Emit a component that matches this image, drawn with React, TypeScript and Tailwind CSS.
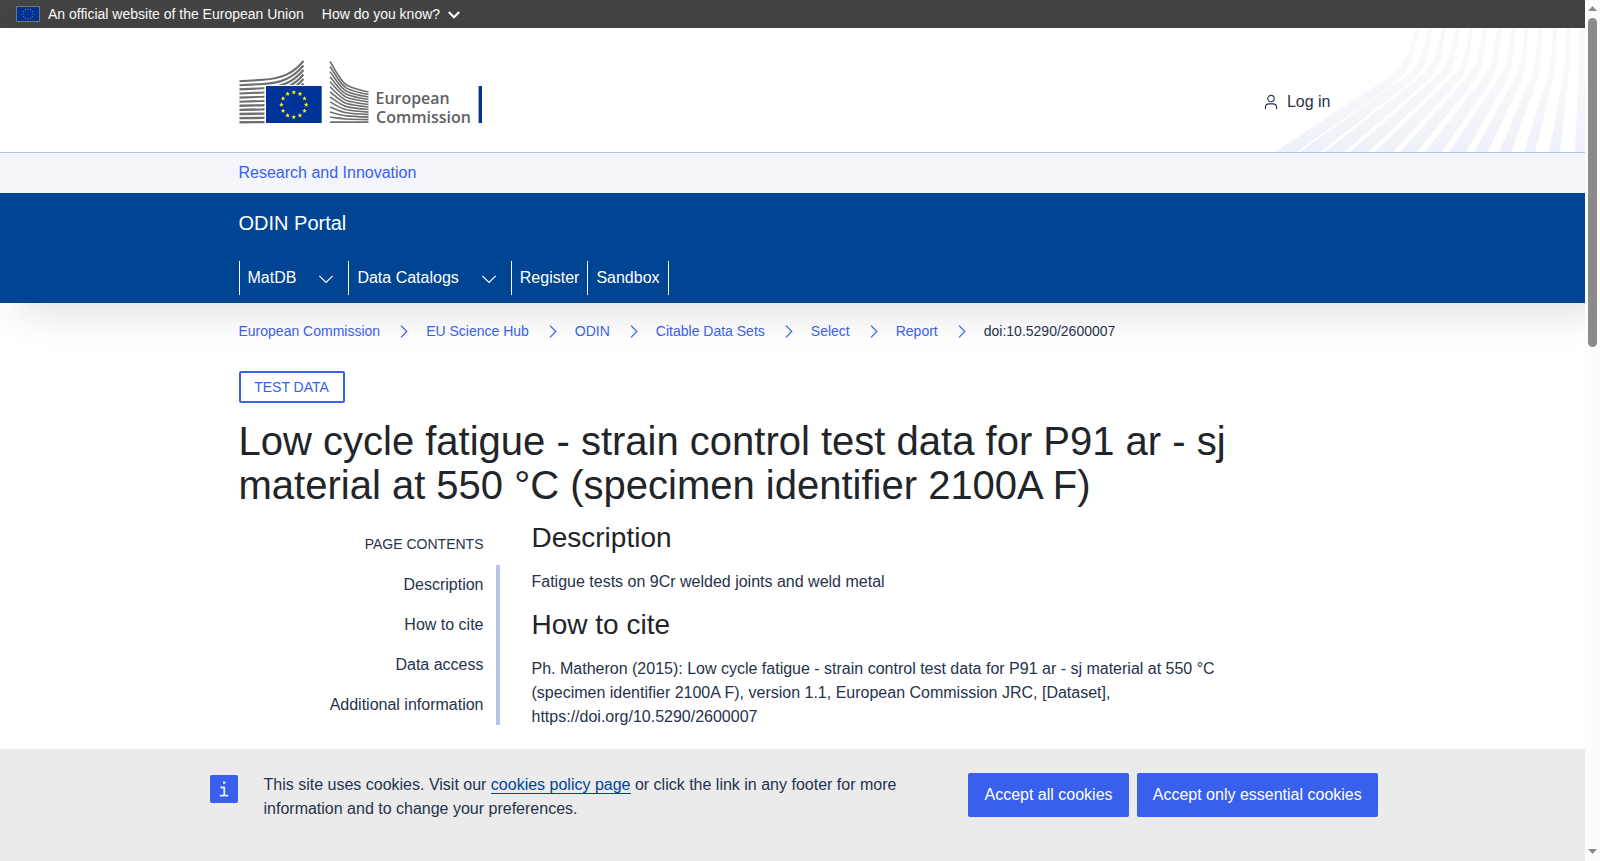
const NAV_ITEMS = [
  { label: "MatDB", hasMenu: true },
  { label: "Data Catalogs", hasMenu: true },
  { label: "Register", hasMenu: false },
  { label: "Sandbox", hasMenu: false },
];

const BREADCRUMBS = ["European Commission", "EU Science Hub", "ODIN", "Citable Data Sets", "Select", "Report"];

const PAGE_CONTENTS = ["Description", "How to cite", "Data access", "Additional information"];

// top left, top right, bottom left, bottom right x of every ribbon
const RIBBONS = [
  [175.5, 179, 35, 57],
  [189, 192.5, 59.5, 80],
  [202.5, 206, 84.5, 104],
  [216, 219.5, 110, 128],
  [230, 233, 135, 153],
  [243.5, 247, 160, 177],
  [257.5, 261.5, 185, 202],
  [271.5, 275.5, 209, 226],
  [285, 288.5, 234, 248],
  [298.5, 302.5, 259, 271],
  [313, 317, 284, 295],
  [326.5, 330, 309, 320],
  [339, 345, 335, 345],
];

function ribbonPath(t1: number, t2: number, b1: number, b2: number) {
  const edge = (t: number, b: number, my: number) => {
    const mx = t - (t - b) * 0.19;
    const slope = (mx - b) / (124 - my);
    return { c1: t - (t - b) * 0.04, c2: mx + slope * 13, mx, my };
  };
  const l = edge(t1, b1, 49);
  const r = edge(t2, b2, 54);
  return `M${t1} 0C${l.c1} 18 ${l.c2} 36 ${l.mx} ${l.my}L${b1} 124H${b2}L${r.mx} ${r.my}C${r.c2} 41 ${r.c1} 20 ${t2} 0Z`;
}

// stripes of the building, left wing: y at the outer edge, at the fold and at the tip
const LEFT_STRIPES = Array.from({ length: 11 }, (_, i) => {
  const outer = 21.2 + i * 4.1;
  const fold = 19.8 + i * 4.23;
  const tip = 1 + i * 4.5;
  return `M1.5 ${outer}L25 ${fold}C44 ${fold - 1.3} 55 ${tip + (fold - tip) * 0.67} 65.5 ${tip}`;
});

const RIGHT_STRIPES = Array.from({ length: 13 }, (_, i) => {
  const outer = 1.5 + i * 5.05;
  const fold = 25 + i * 3.09;
  const tip = 32 + i * 2.51;
  return `M92 ${outer}C98.5 ${outer + (fold - outer) * 0.45} 102.5 ${outer + (fold - outer) * 0.83} 108.5 ${fold}Q114.5 ${(fold + tip) / 2} 130.5 ${tip}`;
});

function Stars({ cx, cy, radius, size }: { cx: number; cy: number; radius: number; size: number }) {
  return (
    <>
      {Array.from({ length: 12 }, (_, i) => {
        const a = (i * Math.PI) / 6;
        const x = cx + radius * Math.sin(a);
        const y = cy - radius * Math.cos(a);
        const points = Array.from({ length: 10 }, (_, k) => {
          const r = k % 2 === 0 ? size : size * 0.45;
          const b = (k * Math.PI) / 5;
          return `${(x + r * Math.sin(b)).toFixed(2)},${(y - r * Math.cos(b)).toFixed(2)}`;
        }).join(" ");
        return <polygon key={i} points={points} fill="#ffed00" />;
      })}
    </>
  );
}

function Logo() {
  return (
    <svg width="246" height="74" viewBox="0 0 246 74" className="-ml-[0.5px] block">
      <g fill="none" stroke="#6d6e70">
        {LEFT_STRIPES.map((d, i) => (
          <path key={d} d={d} strokeWidth={i < 6 ? 2.1 : 2.4} />
        ))}
        {RIGHT_STRIPES.map((d) => (
          <path key={d} d={d} strokeWidth="1.6" />
        ))}
      </g>
      <path d="M26.5 25H86V66H26.5Z" fill="#fff" />
      <path d="M28 26H83.7V63H28Z" fill="#039" />
      <Stars cx={55.8} cy={44.7} radius={12.4} size={2.4} />
      <g fill="#606164" fontSize="17" fontWeight="600" fontFamily="'Open Sans', sans-serif">
        <text x="137.6" y="44" textLength="74" lengthAdjust="spacingAndGlyphs">
          European
        </text>
        <text x="138" y="63" textLength="95" lengthAdjust="spacingAndGlyphs">
          Commission
        </text>
      </g>
      <path d="M240.6 26H244V63H240.6Z" fill="#039" />
    </svg>
  );
}

function Chevron({ className }: { className?: string }) {
  return (
    <svg width="16" height="16" viewBox="0 0 16 16" className={className} fill="none" stroke="currentColor" strokeWidth="1.2">
      <path d="M1.3 4.8L8 11.5L14.7 4.8" />
    </svg>
  );
}

function Globan() {
  return (
    <div className="flex h-7 shrink-0 items-center bg-[#444] pl-4 text-sm text-white">
      <svg width="24" height="16" viewBox="0 0 24 16">
        <path d="M.5 .5H23.5V15.5H.5Z" fill="#039" stroke="#777" />
        <g fill="#8f946a">
          {Array.from({ length: 12 }, (_, i) => (
            <circle key={i} cx={12 + 5 * Math.sin((i * Math.PI) / 6)} cy={8 - 5 * Math.cos((i * Math.PI) / 6)} r=".6" />
          ))}
        </g>
      </svg>
      <span className="ml-2">An official website of the European Union</span>
      <button className="ml-[18px] flex items-center">
        How do you know?
        <svg width="12" height="8" viewBox="0 0 12 8" className="mt-0.5 ml-2" fill="none" stroke="white" strokeWidth="2.2">
          <path d="M.8 1L6 6.2L11.2 1" />
        </svg>
      </button>
    </div>
  );
}

function SiteHeader() {
  return (
    <header className="shadow-[20px_9px_38px_0_rgba(9,20,40,0.14)]">
      <div className="relative h-[125px] border-b border-[#b8c5e9] bg-white">
        <svg width="345" height="124" viewBox="0 0 345 124" className="absolute top-0 right-0">
          <defs>
            <linearGradient id="ribbon" x1="0" y1="0" x2="0" y2="124" gradientUnits="userSpaceOnUse">
              <stop offset="0" stopColor="#f8f8fa" />
              <stop offset=".4" stopColor="#f7f8fa" />
              <stop offset="1" stopColor="#eef1f9" />
            </linearGradient>
          </defs>
          {RIBBONS.map(([t1, t2, b1, b2]) => (
            <path key={t1} d={ribbonPath(t1, t2, b1, b2)} fill="url(#ribbon)" />
          ))}
        </svg>
        <div className="relative mx-auto flex w-[1108px] justify-between">
          <div className="pt-8">
            <Logo />
          </div>
          <a className="mt-[62px] mr-[16px] flex h-6 items-center text-[#26324b]">
            <svg width="14" height="16" viewBox="0 0 14 16" className="mr-[9px]" fill="none" stroke="currentColor" strokeWidth="1.1">
              <circle cx="7" cy="4.6" r="3.2" />
              <path d="M1.4 15.2V13.6Q1.4 9.9 5 9.9H9Q12.6 9.9 12.6 13.6V15.2" />
            </svg>
            Log in
          </a>
        </div>
      </div>
      <div className="h-10 bg-[#f3f5fb]">
        <div className="mx-auto w-[1108px] leading-10 text-[#3860ed]">Research and Innovation</div>
      </div>
      <div className="h-[110px] bg-[#004494] text-white">
        <div className="mx-auto w-[1108px]">
          <div className="pt-[15px] text-xl leading-[30px]">ODIN Portal</div>
          <nav className="mt-[23px] flex h-[34px] border-l border-white">
            {NAV_ITEMS.map((item) => (
              <a key={item.label} className="flex items-center border-r border-white px-2">
                {item.label}
                {item.hasMenu && <Chevron className="mt-0.5 mr-1.5 ml-[22px]" />}
              </a>
            ))}
          </nav>
        </div>
      </div>
    </header>
  );
}

function Breadcrumbs() {
  return (
    <nav className="flex h-6 items-center text-sm text-[#3860ed]">
      {BREADCRUMBS.map((crumb) => (
        <span key={crumb} className="flex items-center">
          {crumb}
          <svg width="8" height="13" viewBox="0 0 8 13" className="mr-[18px] ml-5" fill="none" stroke="currentColor" strokeWidth="1.2">
            <path d="M1 .7L6.8 6.5L1 12.3" />
          </svg>
        </span>
      ))}
      <span className="text-[#26324b]">doi:10.5290/2600007</span>
    </nav>
  );
}

function CookieBanner() {
  return (
    <div className="h-28 shrink-0 bg-[#ebebeb]">
      <div className="mx-auto flex w-[1166px] pt-6">
        <div className="mt-0.5 flex size-7 shrink-0 items-center justify-center rounded-xs bg-[#3860ed]">
          <svg width="10" height="18" viewBox="0 0 10 18" fill="none" stroke="#ebebeb" strokeWidth="1.8">
            <path d="M1.5 7.5H5.3V15.5M.8 15.6H9.2" />
            <path d="M4 1.5H6.4V3.8H4Z" fill="#ebebeb" stroke="none" />
          </svg>
        </div>
        <p className="ml-[26px] w-[704.5px] shrink-0 leading-6 text-[#26324b]">
          This site uses cookies. Visit our <a className="border-b border-[#004494] text-[#004494]">cookies policy page</a> or click
          the link in any footer for more information and to change your preferences.
        </p>
        <div className="flex gap-2 text-white">
          <button className="h-11 w-[161px] rounded-xs bg-[#3860ed] whitespace-nowrap">Accept all cookies</button>
          <button className="h-11 w-[240.5px] rounded-xs bg-[#3860ed] whitespace-nowrap">Accept only essential cookies</button>
        </div>
      </div>
    </div>
  );
}

function Scrollbar() {
  return (
    <div className="flex w-[15px] shrink-0 flex-col items-center bg-[#fcfcfc]">
      <svg width="9" height="5" viewBox="0 0 9 5" className="mt-1.5 shrink-0" fill="#8b8b8b">
        <path d="M0 5L4.5 0L9 5Z" />
      </svg>
      <div className="mt-[7px] h-[329px] w-[9px] rounded-full bg-[#8b8b8b]" />
      <svg width="9" height="5" viewBox="0 0 9 5" className="mt-auto mb-[7px] shrink-0" fill="#8b8b8b">
        <path d="M0 0L4.5 5L9 0Z" />
      </svg>
    </div>
  );
}

export default function App() {
  return (
    <div className="flex h-[861px] w-[1600px] overflow-hidden bg-white font-['Liberation_Sans',Arial,sans-serif] text-base">
      <div className="flex w-[1585px] flex-col overflow-hidden">
        <Globan />
        <SiteHeader />
        <main className="relative mx-auto w-[1108px] grow pt-4">
          <Breadcrumbs />
          <span className="mt-7 flex h-8 w-[106px] items-center justify-center rounded-xs border-2 border-[#3860ed] text-sm text-[#3860ed]">
            TEST DATA
          </span>
          <h1 className="mt-4 text-[40px] leading-[44px] text-[#212529]">
            Low cycle fatigue - strain control test data for P91 ar - sj material at 550 °C (specimen identifier 2100A F)
          </h1>
          <div className="mt-2.5 flex">
            <aside className="w-[261px] text-right text-[#26324b]">
              <div className="pt-[15px] pr-4 text-sm leading-6">PAGE CONTENTS</div>
              <ul className="mt-[9px] border-r-4 border-[#b8c5e9]">
                {PAGE_CONTENTS.map((label) => (
                  <li key={label} className="h-10 pr-3 leading-10">
                    {label}
                  </li>
                ))}
              </ul>
            </aside>
            <section className="ml-8 w-[720px] text-[#26324b]">
              <h2 className="mt-[5px] text-[28px] leading-8 text-[#212529]">Description</h2>
              <p className="mt-4 leading-6">Fatigue tests on 9Cr welded joints and weld metal</p>
              <h2 className="mt-[15px] text-[28px] leading-8 text-[#212529]">How to cite</h2>
              <p className="mt-4 leading-6">
                Ph. Matheron (2015): Low cycle fatigue - strain control test data for P91 ar - sj material at 550 °C (specimen
                identifier 2100A F), version 1.1, European Commission JRC, [Dataset], https://doi.org/10.5290/2600007
              </p>
            </section>
          </div>
        </main>
        <CookieBanner />
      </div>
      <Scrollbar />
    </div>
  );
}
